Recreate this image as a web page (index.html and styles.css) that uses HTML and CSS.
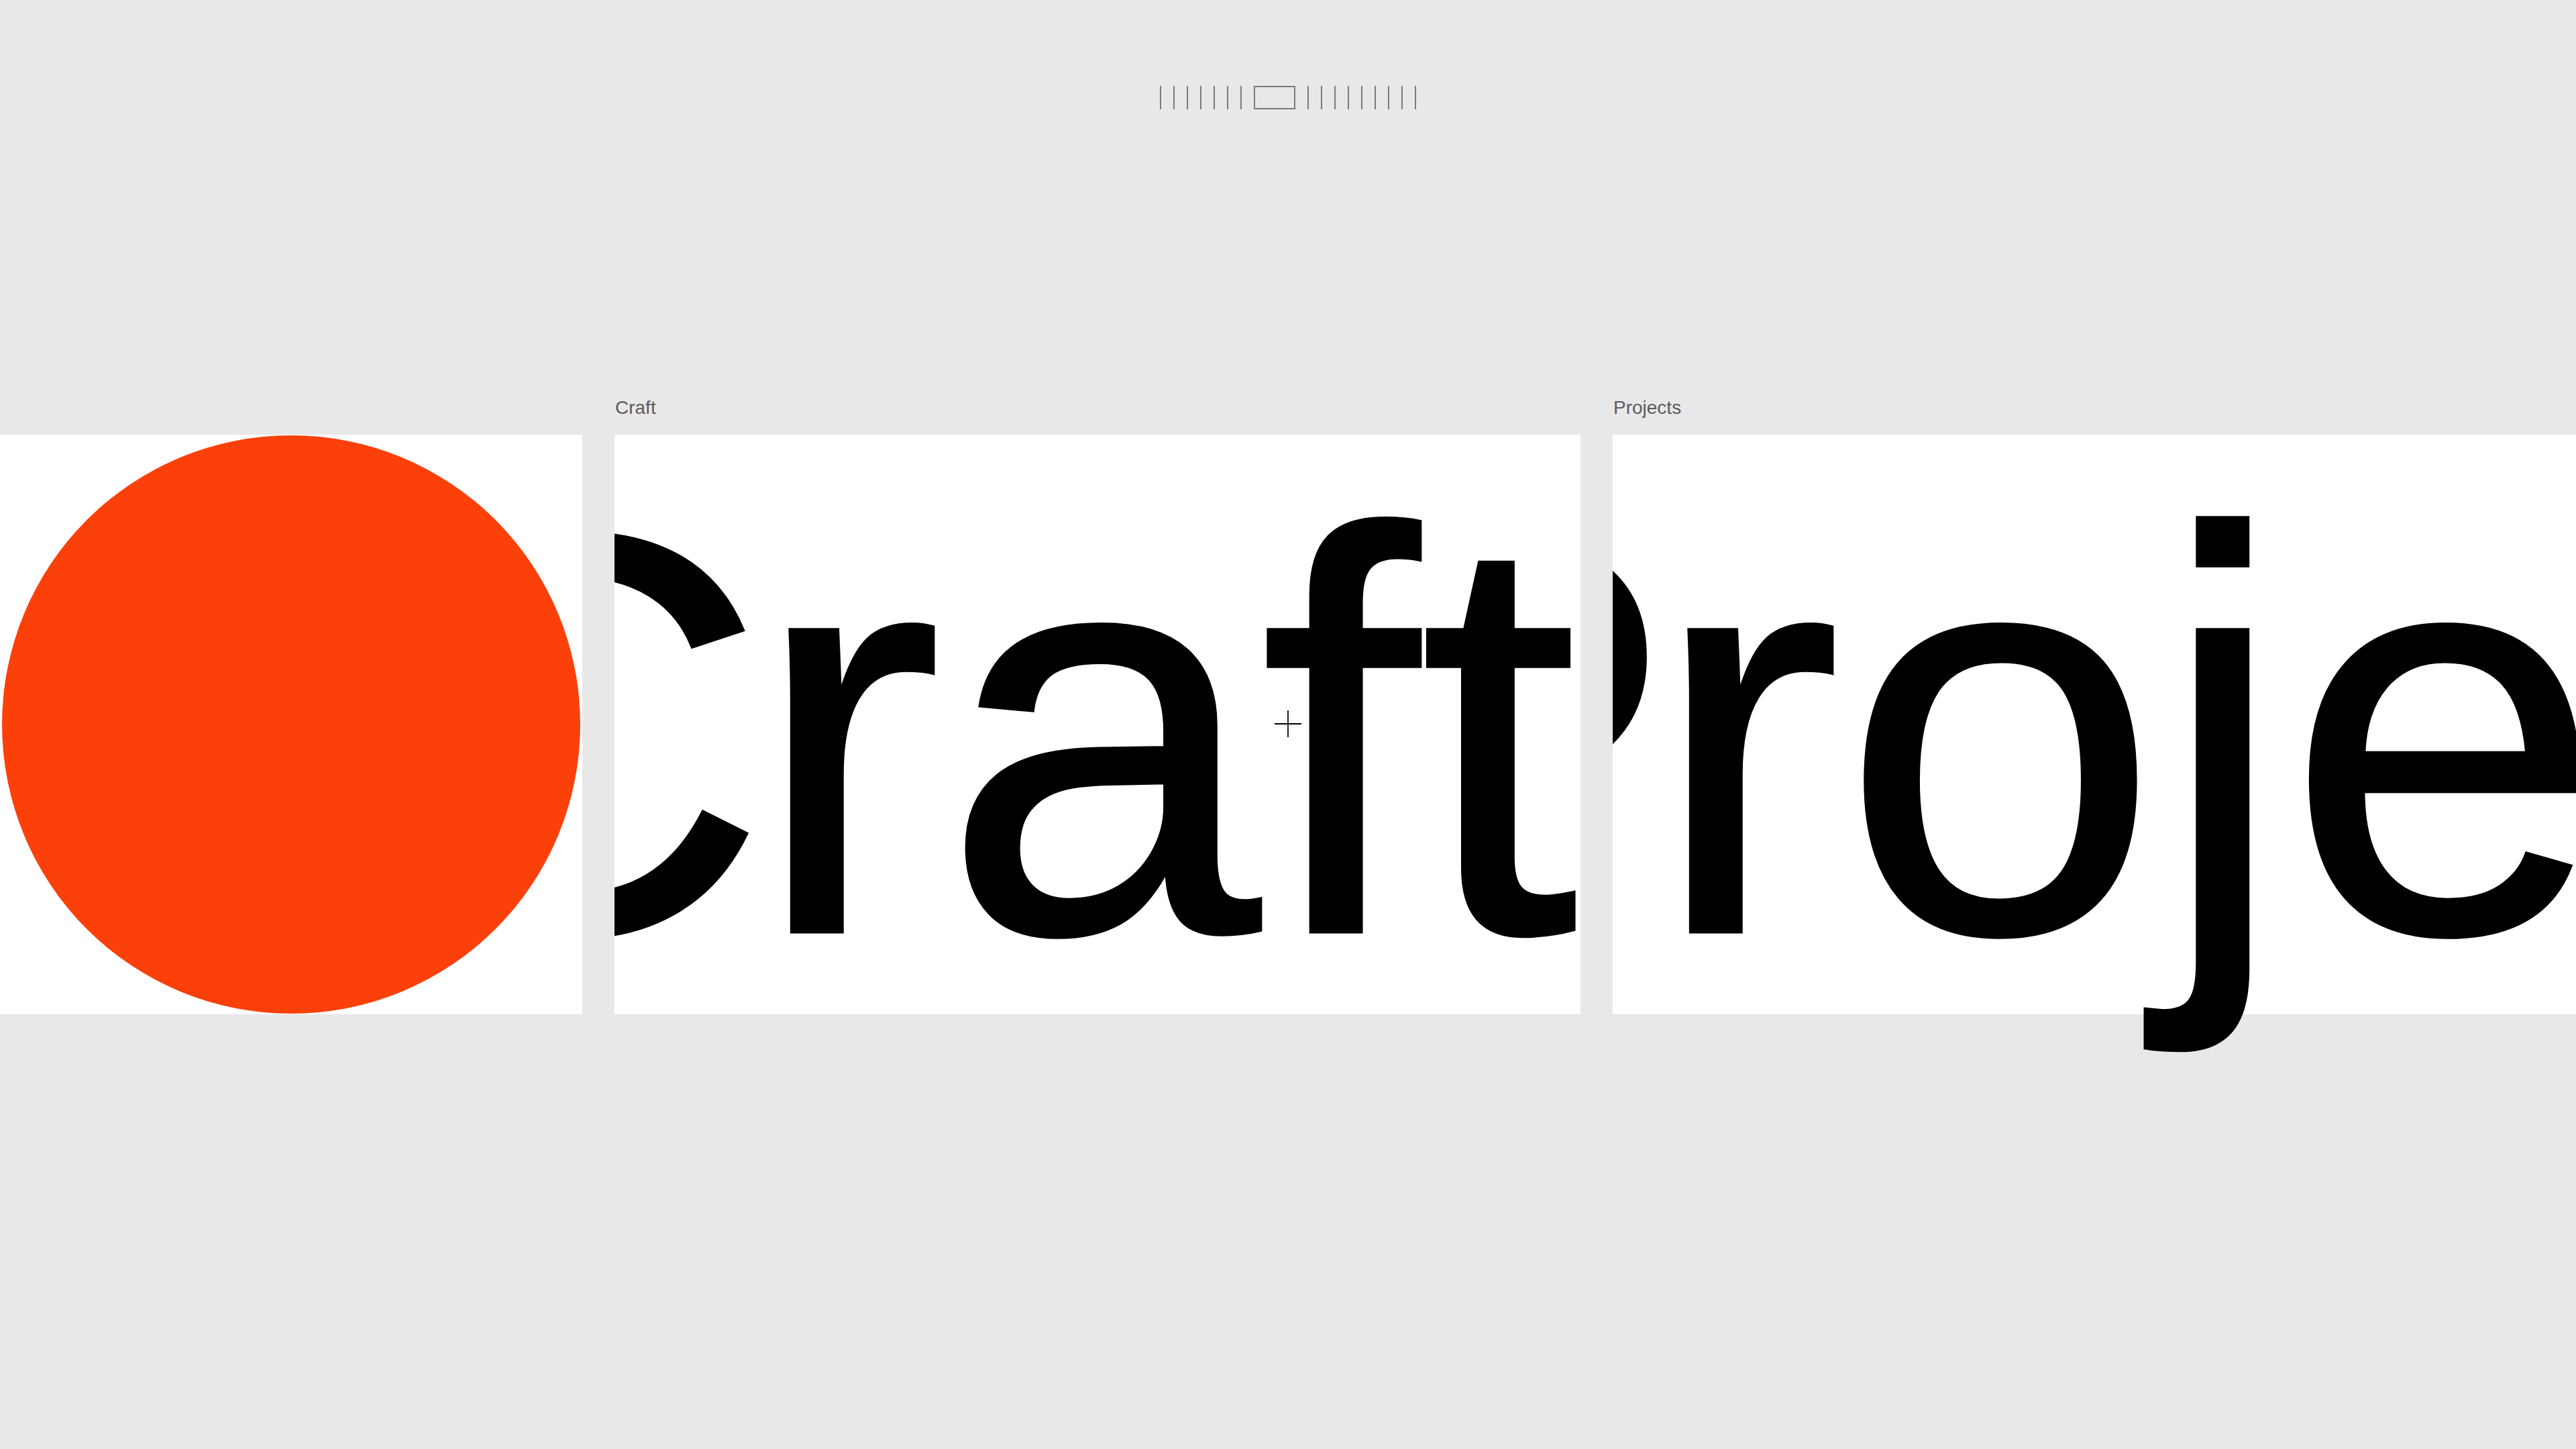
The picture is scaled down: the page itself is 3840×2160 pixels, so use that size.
FILE: index.html
```html
<!DOCTYPE html>
<html lang="en">
<head>
<meta charset="utf-8">
<title>Craft / Projects</title>
<link rel="stylesheet" href="styles.css">
</head>
<body>
  <div class="indicator">
    <span class="tick"></span><span class="tick"></span><span class="tick"></span><span class="tick"></span><span class="tick"></span><span class="tick"></span><span class="tick"></span>
    <span class="current"></span>
    <span class="tick"></span><span class="tick"></span><span class="tick"></span><span class="tick"></span><span class="tick"></span><span class="tick"></span><span class="tick"></span><span class="tick"></span><span class="tick"></span>
  </div>
  <div class="stage">
    <section class="column col-logo">
      <div class="label"></div>
      <div class="panel panel-logo"><div class="circle"></div></div>
    </section>
    <section class="column col-craft">
      <div class="label">Craft</div>
      <div class="panel panel-word"><div class="word word-craft"><span class="lead-c">C</span>raft</div></div>
    </section>
    <section class="column col-projects">
      <div class="label">Projects</div>
      <div class="panel panel-word"><div class="word word-projects"><span class="lead-p">P</span>rojects</div></div>
    </section>
  </div>
  <div class="cursor"><span class="cursor-h"></span><span class="cursor-v"></span></div>
</body>
</html>
```
FILE: styles.css
```css
html, body {
  margin: 0;
  padding: 0;
}
body {
  width: 3840px;
  height: 2160px;
  overflow: hidden;
  background: #e8e8e8;
  font-family: "Liberation Sans", Arial, sans-serif;
  position: relative;
}
.indicator {
  display: flex;
  justify-content: center;
  align-items: stretch;
  gap: 18px;
  padding-top: 128px;
  height: 35px;
}
.tick {
  width: 2px;
  background: #7b7b7b;
}
.current {
  width: 58px;
  border: 2px solid #7b7b7b;
  box-sizing: content-box;
  height: 31px;
}
.stage {
  display: flex;
  gap: 48px;
  margin-top: 425px;
}
.column {
  display: flex;
  flex-direction: column;
}
.col-logo { width: 868px; flex: none; }
.col-craft { width: 1440px; flex: none; }
.col-projects { flex: 1; min-width: 0; }
.label {
  height: 40px;
  line-height: 40px;
  font-size: 28px;
  color: #5c5c5c;
  margin-bottom: 20px;
  padding-left: 1px;
}
.panel {
  height: 864px;
  background: #ffffff;
}
.panel-logo {
  display: flex;
  align-items: center;
  justify-content: center;
}
.circle {
  width: 862px;
  height: 862px;
  border-radius: 50%;
  background: #fc400a;
}
.panel-word {
  clip-path: inset(-400px 0 -400px 0);
}
.word {
  font-size: 852px;
  line-height: 852px;
  padding-top: 20px;
  white-space: nowrap;
  color: #000;
  -webkit-text-stroke: 5px #000;
}
.word-craft { margin-left: -386px; }
.word-projects { margin-left: -475px; }
.lead-c { letter-spacing: -24px; }
.lead-p { letter-spacing: -36px; }
.cursor {
  position: absolute;
  left: 1900px;
  top: 1059px;
  width: 40px;
  height: 40px;
}
.cursor-h {
  position: absolute;
  left: 0;
  top: 19px;
  width: 40px;
  height: 2px;
  background: #000;
}
.cursor-v {
  position: absolute;
  left: 19px;
  top: 0;
  width: 2px;
  height: 40px;
  background: #222;
}
```
